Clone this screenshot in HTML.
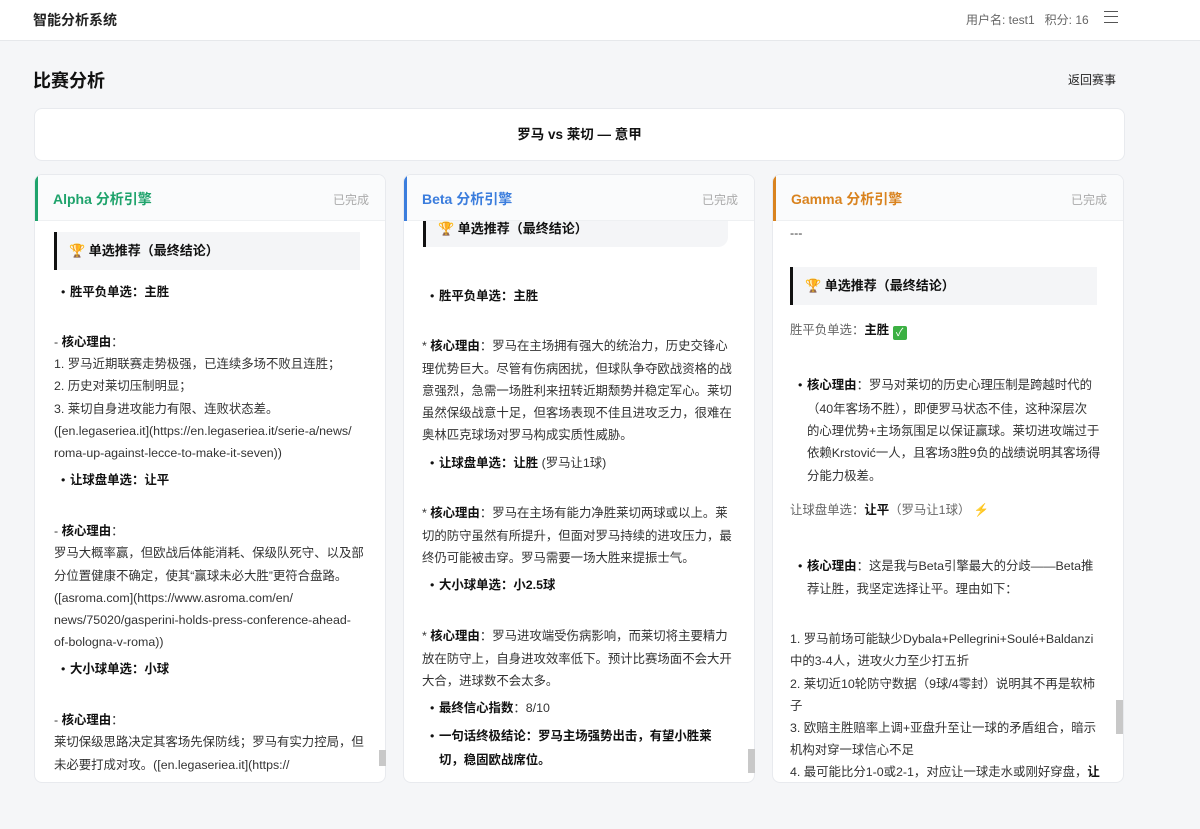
<!DOCTYPE html>
<html><head><meta charset="utf-8">
<style>
*{margin:0;padding:0;box-sizing:border-box}
body{width:1200px;height:829px;background:#f5f6f8;font-family:"Liberation Sans","Noto Sans CJK SC",sans-serif;color:#222;position:relative;overflow:hidden}
.hdr{position:absolute;left:0;top:0;width:1200px;height:41px;background:#fff;border-bottom:1px solid #e6e8eb}
.abs{position:absolute;white-space:nowrap}
.card{position:absolute;top:174px;width:352px;height:609px;background:#fff;border:1px solid #e8eaee;border-radius:8px;overflow:hidden}
.ch{position:absolute;left:0;top:0;width:100%;height:46px;background:#fafbfc;border-bottom:1px solid #eef0f2}
.bar{position:absolute;left:0;top:0;width:3px;height:46px}
.ct{position:absolute;left:18px;top:14px;font-size:14px;font-weight:bold}
.done{position:absolute;right:16px;top:16px;font-size:12px;color:#aaa}
.l{position:absolute;white-space:nowrap;font-size:12.4px;line-height:22px;height:22px;color:#333}
b{color:#111}
.bq{position:absolute;background:#f4f5f7;border-left:3px solid #111;font-size:13px;font-weight:bold;color:#111;padding-left:12px}
.dot::before{content:"•";position:absolute;left:-9px;color:#111}
.sb{position:absolute;width:7px;background:#c8c8c8}
.g{color:#666}
</style></head><body>
<div class="hdr">
 <div class="abs" style="left:33px;top:10px;font-size:14px;font-weight:bold;color:#222">智能分析系统</div>
 <div class="abs" style="left:966px;top:11px;font-size:12px;color:#666">用户名: test1&nbsp;&nbsp; 积分: 16</div>
 <div class="abs" style="left:1104px;top:11px;width:14px;height:12px;border-top:1.5px solid #555;border-bottom:1.5px solid #555"><div style="margin-top:3.5px;height:1.5px;background:#555"></div></div>
</div>
<div class="abs" style="left:33px;top:67px;font-size:18px;font-weight:bold;color:#111">比赛分析</div>
<div class="abs" style="left:1068px;top:71px;font-size:12px;color:#222">返回赛事</div>
<div class="abs" style="left:34px;top:108px;width:1091px;height:53px;background:#fff;border:1px solid #e8eaee;border-radius:8px;text-align:center;line-height:51px;font-size:13.5px;font-weight:bold;color:#111">罗马 vs 莱切 — 意甲</div>

<!-- Alpha -->
<div class="card" style="left:34px">
 <div class="ch"><div class="bar" style="background:#1fa36c"></div><div class="ct" style="color:#1fa36c">Alpha 分析引擎</div><div class="done">已完成</div></div>
</div>
<div class="bq" style="left:54px;top:232px;width:306px;height:38px;line-height:38px">🏆 单选推荐（最终结论）</div>
<div class="l dot" style="left:70px;top:281px"><b>胜平负单选：主胜</b></div>
<div class="l" style="left:54px;top:331px">- <b>核心理由</b>：</div>
<div class="l" style="left:54px;top:353px">1. 罗马近期联赛走势极强，已连续多场不败且连胜；</div>
<div class="l" style="left:54px;top:375px">2. 历史对莱切压制明显；</div>
<div class="l" style="left:54px;top:398px">3. 莱切自身进攻能力有限、连败状态差。</div>
<div class="l" style="left:54px;top:420px">([en.legaseriea.it](https://en.legaseriea.it/serie-a/news/</div>
<div class="l" style="left:54px;top:442px">roma-up-against-lecce-to-make-it-seven))</div>
<div class="l dot" style="left:70px;top:469px"><b>让球盘单选：让平</b></div>
<div class="l" style="left:54px;top:520px">- <b>核心理由</b>：</div>
<div class="l" style="left:54px;top:542px">罗马大概率赢，但欧战后体能消耗、保级队死守、以及部</div>
<div class="l" style="left:54px;top:565px">分位置健康不确定，使其“赢球未必大胜”更符合盘路。</div>
<div class="l" style="left:54px;top:587px">([asroma.com](https://www.asroma.com/en/</div>
<div class="l" style="left:54px;top:609px">news/75020/gasperini-holds-press-conference-ahead-</div>
<div class="l" style="left:54px;top:631px">of-bologna-v-roma))</div>
<div class="l dot" style="left:70px;top:658px"><b>大小球单选：小球</b></div>
<div class="l" style="left:54px;top:709px">- <b>核心理由</b>：</div>
<div class="l" style="left:54px;top:731px">莱切保级思路决定其客场先保防线；罗马有实力控局，但</div>
<div class="l" style="left:54px;top:754px;height:28px;overflow:hidden">未必要打成对攻。([en.legaseriea.it](https://</div>
<div class="sb" style="left:379px;top:750px;height:16px"></div>

<!-- Beta -->
<div class="card" style="left:403px">
 <div class="ch"><div class="bar" style="background:#3b7ddd"></div><div class="ct" style="color:#3b7ddd">Beta 分析引擎</div><div class="done">已完成</div></div>
</div>
<div class="bq" style="left:423px;top:221px;width:305px;height:26px;line-height:16px;border-radius:0 0 10px 0">🏆 单选推荐（最终结论）</div>
<div class="l dot" style="left:439px;top:285px"><b>胜平负单选：主胜</b></div>
<div class="l" style="left:422px;top:335px">* <b>核心理由</b>：罗马在主场拥有强大的统治力，历史交锋心</div>
<div class="l" style="left:422px;top:358px">理优势巨大。尽管有伤病困扰，但球队争夺欧战资格的战</div>
<div class="l" style="left:422px;top:380px">意强烈，急需一场胜利来扭转近期颓势并稳定军心。莱切</div>
<div class="l" style="left:422px;top:402px">虽然保级战意十足，但客场表现不佳且进攻乏力，很难在</div>
<div class="l" style="left:422px;top:424px">奥林匹克球场对罗马构成实质性威胁。</div>
<div class="l dot" style="left:439px;top:452px"><b>让球盘单选：让胜</b> (罗马让1球)</div>
<div class="l" style="left:422px;top:502px">* <b>核心理由</b>：罗马在主场有能力净胜莱切两球或以上。莱</div>
<div class="l" style="left:422px;top:525px">切的防守虽然有所提升，但面对罗马持续的进攻压力，最</div>
<div class="l" style="left:422px;top:547px">终仍可能被击穿。罗马需要一场大胜来提振士气。</div>
<div class="l dot" style="left:439px;top:574px"><b>大小球单选：小2.5球</b></div>
<div class="l" style="left:422px;top:625px">* <b>核心理由</b>：罗马进攻端受伤病影响，而莱切将主要精力</div>
<div class="l" style="left:422px;top:648px">放在防守上，自身进攻效率低下。预计比赛场面不会大开</div>
<div class="l" style="left:422px;top:670px">大合，进球数不会太多。</div>
<div class="l dot" style="left:439px;top:697px"><b>最终信心指数</b>：8/10</div>
<div class="l dot" style="left:439px;top:725px"><b>一句话终极结论：罗马主场强势出击，有望小胜莱</b></div>
<div class="l" style="left:439px;top:749px"><b>切，稳固欧战席位。</b></div>
<div class="sb" style="left:748px;top:749px;height:24px"></div>

<!-- Gamma -->
<div class="card" style="left:772px">
 <div class="ch"><div class="bar" style="background:#d9831f"></div><div class="ct" style="color:#d9831f">Gamma 分析引擎</div><div class="done">已完成</div></div>
</div>
<div class="l" style="left:790px;top:222px">---</div>
<div class="bq" style="left:790px;top:267px;width:307px;height:38px;line-height:38px">🏆 单选推荐（最终结论）</div>
<div class="l g" style="left:790px;top:319px">胜平负单选：<b>主胜</b> <span style="display:inline-block;width:14px;height:14px;background:#3cb043;border-radius:2px;color:#fff;font-size:11px;line-height:14px;text-align:center;vertical-align:-2px">✓</span></div>
<div class="l dot" style="left:807px;top:374px"><b>核心理由</b>：罗马对莱切的历史心理压制是跨越时代的</div>
<div class="l" style="left:807px;top:398px">（40年客场不胜），即便罗马状态不佳，这种深层次</div>
<div class="l" style="left:807px;top:420px">的心理优势+主场氛围足以保证赢球。莱切进攻端过于</div>
<div class="l" style="left:807px;top:442px">依赖Krstović一人，且客场3胜9负的战绩说明其客场得</div>
<div class="l" style="left:807px;top:465px">分能力极差。</div>
<div class="l g" style="left:790px;top:499px">让球盘单选：<b>让平</b>（罗马让1球） <span style="color:#e8a317">⚡</span></div>
<div class="l dot" style="left:807px;top:555px"><b>核心理由</b>：这是我与Beta引擎最大的分歧——Beta推</div>
<div class="l" style="left:807px;top:578px">荐让胜，我坚定选择让平。理由如下：</div>
<div class="l" style="left:790px;top:628px">1. 罗马前场可能缺少Dybala+Pellegrini+Soulé+Baldanzi</div>
<div class="l" style="left:790px;top:650px">中的3-4人，进攻火力至少打五折</div>
<div class="l" style="left:790px;top:673px">2. 莱切近10轮防守数据（9球/4零封）说明其不再是软柿</div>
<div class="l" style="left:790px;top:695px">子</div>
<div class="l" style="left:790px;top:717px">3. 欧赔主胜赔率上调+亚盘升至让一球的矛盾组合，暗示</div>
<div class="l" style="left:790px;top:739px">机构对穿一球信心不足</div>
<div class="l" style="left:790px;top:761px;height:21px;overflow:hidden">4. 最可能比分1-0或2-1，对应让一球走水或刚好穿盘，<b>让</b></div>
<div class="sb" style="left:1116px;top:700px;height:34px"></div>
</body></html>
